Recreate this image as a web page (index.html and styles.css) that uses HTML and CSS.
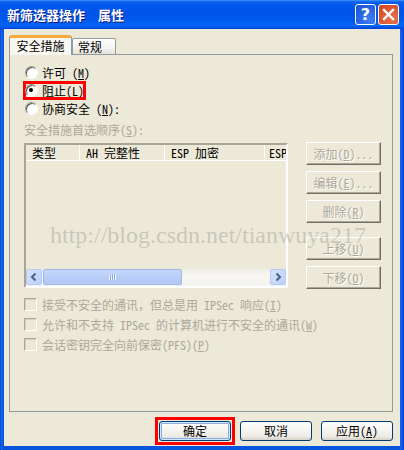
FILE: index.html
```html
<!DOCTYPE html>
<html>
<head>
<meta charset="utf-8">
<link rel="stylesheet" href="styles.css">
</head>
<body>
<div class="window">
  <div class="titlebar">
    <span class="title">新筛选器操作　属性</span>
    <div class="tbtns">
      <span class="tbtn help">?</span>
      <span class="tbtn close"><svg width="19" height="19" viewBox="0 0 19 19"><path d="M5 5 L14 14 M14 5 L5 14" stroke="#fff" stroke-width="2.4" stroke-linecap="square"/></svg></span>
    </div>
  </div>
  <div class="client">
    <div class="tabs">
      <div class="tab active">安全措施</div>
      <div class="tab">常规</div>
    </div>
    <div class="panel">
      <div class="row"><span class="opt"><i class="radio"></i><span>许可 (<u>M</u>)</span></span></div>
      <div class="row"><span class="opt hl"><i class="radio on"></i><span>阻止(<u>L</u>)</span></span></div>
      <div class="row"><span class="opt"><i class="radio"></i><span>协商安全 (<u>N</u>):</span></span></div>
      <div class="label">安全措施首选顺序(<u>S</u>):</div>
      <div class="listrow">
        <div class="list">
          <div class="lhead">
            <span class="hc c1">类型</span>
            <span class="hc c2">AH 完整性</span>
            <span class="hc c3">ESP 加密</span>
            <span class="hc c4">ESP</span>
          </div>
          <div class="lbody"></div>
          <div class="hscroll">
            <span class="sbtnarrow"><svg width="16" height="16" viewBox="0 0 16 16"><path d="M9.5 4.5 L6 8 L9.5 11.5" fill="none" stroke="#4D6185" stroke-width="2"/></svg></span>
            <span class="thumb"><i class="grip"></i></span>
            <span class="track"></span>
            <span class="sbtnarrow"><svg width="16" height="16" viewBox="0 0 16 16"><path d="M6.5 4.5 L10 8 L6.5 11.5" fill="none" stroke="#4D6185" stroke-width="2"/></svg></span>
          </div>
        </div>
        <div class="sidebtns">
          <div class="sbtn">添加(<u>D</u>)...</div>
          <div class="sbtn">编辑(<u>E</u>)...</div>
          <div class="sbtn">删除(<u>R</u>)</div>
          <div class="sbtn gapbig">上移(<u>U</u>)</div>
          <div class="sbtn">下移(<u>O</u>)</div>
        </div>
      </div>
      <div class="checks">
        <div class="crow"><i class="cbox"></i><span>接受不安全的通讯，但总是用 IPSec 响应(<u>I</u>)</span></div>
        <div class="crow"><i class="cbox"></i><span>允许和不支持 IPSec 的计算机进行不安全的通讯(<u>W</u>)</span></div>
        <div class="crow"><i class="cbox"></i><span>会话密钥完全向前保密(PFS)(<u>P</u>)</span></div>
      </div>
    </div>
    <div class="footer">
      <span class="hlbox"><span class="btn def">确定</span></span>
      <span class="btn">取消</span>
      <span class="btn">应用(<u>A</u>)</span>
    </div>
  </div>
  <div class="watermark">http://blog.csdn.net/tianwuya217</div>
</div>
</body>
</html>
```
FILE: styles.css
```css
* { box-sizing: border-box; }
html, body { margin: 0; padding: 0; }
body {
  width: 404px;
  height: 450px;
  overflow: hidden;
  font-family: "Noto Sans Mono CJK SC", "Noto Sans CJK SC", sans-serif;
  font-size: 12px;
  color: #000;
  background: #ECE9D8;
}
u { text-decoration: underline; }

.window {
  position: relative;
  width: 404px;
  height: 450px;
  display: flex;
  flex-direction: column;
  background: linear-gradient(to right, #0831D9 0, #166AEE 1px, #0855DD 3px, #0855DD 400px, #166AEE 401px, #0831D9 404px);
}

.titlebar {
  height: 29px;
  flex: none;
  display: flex;
  align-items: center;
  justify-content: space-between;
  padding: 0 5px 0 7px;
  background: linear-gradient(#3D95FF 0, #0A5FEA 2px, #0058EE 5px, #0054E8 12px, #0058EC 20px, #0066F5 25px, #005BEE 27px, #003DD7 29px);
}
.title {
  color: #fff;
  font-family: "Noto Sans CJK SC", sans-serif;
  font-weight: bold;
  font-size: 13px;
  text-shadow: 1px 1px 0 #0A1883;
  margin-top: -1px;
}
.tbtns { display: flex; gap: 2px; }
.tbtn {
  width: 21px;
  height: 21px;
  border: 1px solid #fff;
  border-radius: 3px;
  display: flex;
  align-items: center;
  justify-content: center;
  color: #fff;
}
.help {
  background: radial-gradient(circle at 70% 75%, #3F7FF5 0, #2663E0 60%, #1C50C8 100%);
  font-family: "DejaVu Sans", sans-serif;
  font-weight: bold;
  font-size: 16px;
  line-height: 1;
}
.close {
  background: radial-gradient(circle at 70% 75%, #E87353 0, #DE5730 55%, #C94520 100%);
}

.client {
  flex: 1;
  margin: 0 4px 4px 4px;
  background: #ECE9D8;
  display: flex;
  flex-direction: column;
  padding: 6px 7px 0 5px;
}

.tabs {
  height: 19px;
  display: flex;
  align-items: flex-start;
  position: relative;
  z-index: 2;
}
.tab {
  height: 16px;
  margin-top: 3px;
  width: 44px;
  padding-left: 5px;
  border: 1px solid #919B9C;
  border-bottom: none;
  border-radius: 2px 2px 0 0;
  background: linear-gradient(#FFFFFF, #F3F3EF 60%, #E3E2DA);
  line-height: 15px;
}
.tab.active {
  height: 20px;
  margin-top: 0;
  width: 63px;
  padding-left: 0;
  text-align: center;
  border-top: 3px solid #F7A93C;
  background: #F8F7F2;
  line-height: 16px;
  border-radius: 3px 3px 0 0;
}

.panel {
  height: 358px;
  flex: none;
  border: 1px solid #919B9C;
  background: #ECE9D8;
  padding: 8px 0 0 14px;
  display: flex;
  flex-direction: column;
  align-items: flex-start;
}
.row {
  height: 18px;
  display: flex;
  align-items: center;
}
.opt {
  display: inline-flex;
  align-items: center;
  gap: 4px;
  height: 15px;
  margin-left: 1px;
  line-height: 15px;
}
.hl { outline: 3px solid #FF0000; outline-offset: -1px; }
.radio {
  width: 13px;
  height: 13px;
  border-radius: 50%;
  border: 1px solid;
  border-color: #9C9A90 #FFFFFF #FFFFFF #9C9A90;
  background: #fff;
  box-shadow: inset 1px 1px 0 #5A5850;
  position: relative;
  flex: none;
}
.radio.on::after {
  content: "";
  position: absolute;
  left: 3px;
  top: 3px;
  width: 4px;
  height: 4px;
  border-radius: 50%;
  background: #000;
}

.label {
  margin-top: 4px;
  height: 18px;
  line-height: 18px;
  color: #ACA899;
}

.listrow {
  margin-top: 4px;
  display: flex;
  align-items: flex-start;
}
.list {
  width: 264px;
  height: 145px;
  border: 2px solid;
  border-color: #A8A596 #FFFFFF #FFFFFF #A8A596;
  display: flex;
  flex-direction: column;
  overflow: hidden;
}
.lhead {
  height: 16px;
  display: flex;
  border-bottom: 1px solid #fff;
  flex: none;
}
.hc {
  height: 15px;
  padding-left: 6px;
  border-right: 1px solid #fff;
  white-space: nowrap;
  line-height: 15px;
  flex: none;
}
.c1 { width: 54px; }
.c2 { width: 85px; }
.c3 { width: 100px; }
.c4 { width: 21px; padding-left: 4px; border-right: none; }
.lbody { flex: 1; }
.hscroll {
  height: 17px;
  flex: none;
  display: flex;
  background: linear-gradient(#EEEDE5, #F7F6F2 40%, #F4F3EE);
}
.sbtnarrow {
  width: 16px;
  height: 16px;
  border: 1px solid #B7CAF5;
  border-radius: 2px;
  background: linear-gradient(135deg, #D6E2FD, #BCD0FA);
  display: flex;
  align-items: center;
  justify-content: center;
  flex: none;
}
.sbtnarrow svg { display: block; margin: -1px; }
.thumb {
  width: 139px;
  margin-left: 1px;
  height: 16px;
  border: 1px solid #A2B8EA;
  border-radius: 2px;
  background: linear-gradient(#C6D7FB, #B8CEF8 50%, #B0C8F6);
  display: flex;
  align-items: center;
  justify-content: center;
  flex: none;
}
.grip {
  width: 7px;
  height: 6px;
  background: repeating-linear-gradient(to right, #EEF4FE 0, #EEF4FE 1px, #8CA8E2 1px, #8CA8E2 2px);
}
.track { flex: 1; }

.sidebtns {
  margin-left: 18px;
  margin-top: -1px;
  display: flex;
  flex-direction: column;
  gap: 6px;
}
.sbtn {
  width: 75px;
  height: 23px;
  border: 1px solid;
  border-color: #FFFFFF #716F64 #716F64 #FFFFFF;
  box-shadow: inset -1px -1px 0 #ACA899;
  background: #ECE9D8;
  color: #ACA899;
  text-shadow: 1px 1px 0 #fff;
  display: flex;
  align-items: center;
  justify-content: center;
  line-height: 14px;
}
.sbtn.gapbig { margin-top: 8px; }

.checks {
  margin-top: 5px;
  display: flex;
  flex-direction: column;
}
.crow {
  height: 20px;
  display: flex;
  align-items: center;
  gap: 5px;
  color: #ACA899;
}
.cbox {
  width: 13px;
  height: 13px;
  border: 1px solid;
  border-color: #ACA899 #FFFFFF #FFFFFF #ACA899;
  box-shadow: inset 1px 1px 0 #D4D0C4;
  background: #ECE9D8;
  flex: none;
}

.footer {
  margin-top: 9px;
  display: flex;
  justify-content: flex-end;
  gap: 9px;
}
.hlbox {
  display: inline-flex;
  outline: 3px solid #FF0000;
  outline-offset: 1px;
}
.btn {
  width: 72px;
  height: 20px;
  border: 1px solid #003C74;
  border-radius: 3px;
  background: linear-gradient(#FFFFFF, #F6F5F1 40%, #ECEBE6 80%, #D6D0C5);
  display: flex;
  align-items: center;
  justify-content: center;
  line-height: 14px;
}
.btn.def {
  box-shadow: inset 0 0 0 1px #CEE7FF, inset 0 0 0 2px #89ADE4;
}

.watermark {
  position: absolute;
  left: 50px;
  top: 223px;
  font-family: "Liberation Serif", serif;
  font-size: 24px;
  line-height: 24px;
  color: rgba(110, 110, 110, 0.28);
  white-space: nowrap;
  pointer-events: none;
}
```
